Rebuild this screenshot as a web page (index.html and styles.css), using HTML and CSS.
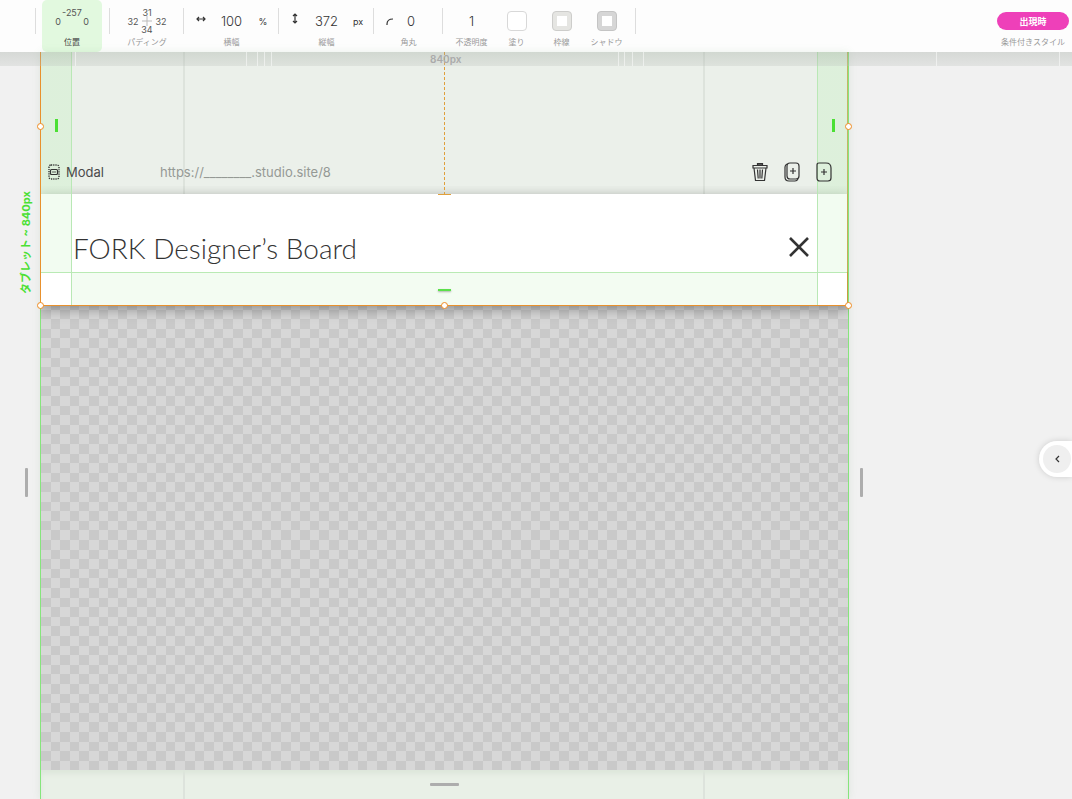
FILE: index.html
```html
<!DOCTYPE html>
<html lang="ja">
<head>
    <meta charset="UTF-8">
    <meta name="viewport" content="width=device-width, initial-scale=1.0">
    <title>FORK Designer's Board - Modal</title>
    <link rel="stylesheet" href="styles.css">
</head>
<body>
    <header class="toolbar">
        <div class="group first"></div>
        <div class="group">
            <div class="box active">
                <div class="sides">
                    <input class="top" type="text" value="-257" aria-label="上">
                    <input class="left" type="text" value="0" aria-label="左">
                    <input class="right" type="text" value="0" aria-label="右">
                </div>
                <span class="caption">位置</span>
            </div>
        </div>
        <div class="group">
            <div class="box">
                <div class="sides">
                    <input class="top" type="text" value="31" aria-label="上の余白">
                    <input class="left" type="text" value="32" aria-label="左の余白">
                    <svg class="cross" width="10" height="10" viewBox="0 0 10 10"><path d="M5 0v10M0 5h10" stroke="#bbb" fill="none"/></svg>
                    <input class="right" type="text" value="32" aria-label="右の余白">
                    <input class="bottom" type="text" value="34" aria-label="下の余白">
                </div>
                <span class="caption">パディング</span>
            </div>
        </div>
        <div class="group size">
            <div class="field">
                <svg width="10" height="8" viewBox="0 0 10 8"><path d="M1 4h8M3 2L1 4l2 2M7 2l2 2-2 2" stroke="#333" stroke-width="1.2" fill="none"/></svg>
                <input id="width" type="text" value="100">
                <span class="unit">%</span>
            </div>
            <label class="caption" for="width">横幅</label>
        </div>
        <div class="group size">
            <div class="field">
                <svg width="10" height="12" viewBox="0 0 10 12"><path d="M4 1v9M2 3l2-2 2 2M2 8l2 2 2-2" stroke="#333" stroke-width="1.2" fill="none"/></svg>
                <input id="height" type="text" value="372">
                <span class="unit">px</span>
            </div>
            <label class="caption" for="height">縦幅</label>
        </div>
        <div class="group radius">
            <div class="field">
                <svg width="8" height="8" viewBox="0 0 8 8"><path d="M1 8V7q0-5 6-5" stroke="#333" stroke-width="1.2" fill="none"/></svg>
                <input id="radius" type="text" value="0">
            </div>
            <label class="caption" for="radius">角丸</label>
        </div>
        <div class="group look">
            <div class="item">
                <input id="opacity" type="text" value="1">
                <label class="caption" for="opacity">不透明度</label>
            </div>
            <div class="item">
                <button class="swatch" id="fill" type="button"></button>
                <label class="caption" for="fill">塗り</label>
            </div>
            <div class="item">
                <button class="swatch border" id="border" type="button"></button>
                <label class="caption" for="border">枠線</label>
            </div>
            <div class="item">
                <button class="swatch shadow" id="shadow" type="button"></button>
                <label class="caption" for="shadow">シャドウ</label>
            </div>
        </div>
        <div class="condition">
            <button class="pill" id="condition" type="button">出現時</button>
            <label class="caption" for="condition">条件付きスタイル</label>
        </div>
    </header>

    <main class="workspace">
        <div class="gutter">
            <span class="breakpoint">タブレット ~ 840px</span>
            <span class="grip"></span>
        </div>

        <div class="stage">
            <section class="selected">
                <div class="above">
                    <div class="modal-bar">
                        <svg width="12" height="16" viewBox="0 0 12 16" fill="none" stroke="#333">
                            <rect x="1" y="1" width="10" height="14" rx="2" stroke-width="1.4" stroke-dasharray="1.2 1"/>
                            <rect x="2.5" y="5.5" width="7" height="5" rx="1" stroke-width="1.2"/>
                            <path d="M4 8h4" stroke-width=".8"/>
                        </svg>
                        <span class="name">Modal</span>
                        <a class="url" href="#">https://________.studio.site/8</a>
                        <div class="actions">
                            <button type="button" aria-label="削除">
                                <svg width="16" height="20" viewBox="0 0 16 20" fill="none" stroke="#333" stroke-width="1.2">
                                    <path d="M5.5 3V1.5h5V3" fill="#555"/>
                                    <path d="M1 3.5h14v2.5H1zM2 6l1.5 12.5h9L14 6M5.5 7.5l.7 9M8 7.5v9M10.5 7.5l-.7 9"/>
                                </svg>
                            </button>
                            <button type="button" aria-label="複製">
                                <svg width="16" height="20" viewBox="0 0 16 20" fill="none" stroke="#333" stroke-width="1.2">
                                    <path d="M6 1h6q3 0 3 3v10q0 3-3 3H6q-3 0-3-3V4q0-3 3-3z"/>
                                    <path d="M3 2Q1 3 1 5v10q0 4 4 4h6q2 0 3-2M9 6v6M6 9h6"/>
                                </svg>
                            </button>
                            <button type="button" aria-label="追加">
                                <svg width="16" height="20" viewBox="0 0 16 20" fill="none" stroke="#333" stroke-width="1.2">
                                    <path d="M3 1h7q5 0 5 5v10q0 3-3 3H4q-3 0-3-3V3q0-2 2-2zM8 7v6M5 10h6"/>
                                </svg>
                            </button>
                        </div>
                    </div>
                </div>
                <div class="modal">
                    <div class="modal-head">
                        <h1>FORK Designer’s Board</h1>
                        <button class="close" type="button" aria-label="閉じる">
                            <svg width="22" height="22" viewBox="0 0 22 22"><path d="M2 2l18 18M20 2L2 20" stroke="#333" stroke-width="2.6"/></svg>
                        </button>
                    </div>
                    <div class="modal-pad"><span></span></div>
                </div>
                <div class="outline">
                    <i class="side-pad start"></i>
                    <i class="side-pad end"></i>
                    <i class="offset-line"></i>
                    <i class="handle mid-left"></i>
                    <i class="handle mid-right"></i>
                    <i class="handle bottom-left"></i>
                    <i class="handle bottom-center"></i>
                    <i class="handle bottom-right"></i>
                </div>
            </section>
            <div class="checker"></div>
            <div class="below"><span class="grip"></span></div>
        </div>

        <div class="gutter end-gutter">
            <span class="grip"></span>
        </div>

        <div class="ruler">
            <svg width="100%" height="14">
                <path d="M75.5 0v14M246.5 0v14M257.5 0v14M264.5 0v14M271.5 0v14M618.5 0v14M624.5 0v14M632.5 0v14M643.5 0v14M936.5 0v14M1059.5 0v14" stroke="#fff" stroke-opacity=".5"/>
            </svg>
            <span>840px</span>
        </div>
        <button class="panel-toggle" type="button" aria-label="パネルを開く">
            <span><svg width="8" height="10" viewBox="0 0 8 10"><path d="M6 2L3 5l3 3" stroke="#333" stroke-width="1.2" fill="none"/></svg></span>
        </button>
    </main>
</body>
</html>
```
FILE: styles.css
```css
* {
    box-sizing: border-box;
}
body {
    margin: 0;
    min-height: 100vh;
    display: flex;
    flex-direction: column;
    background: #f1f1f1;
    color: #333;
    font-family: Inter, "Noto Sans CJK JP", sans-serif;
    font-size: 13px;
}
button {
    padding: 0;
    border: none;
    background: none;
    cursor: pointer;
}
input {
    border: none;
    padding: 0;
    background: none;
    color: #333;
    font: inherit;
    font-weight: 300;
    text-align: center;
    min-width: 0;
}
svg {
    display: block;
}

/* toolbar */
.toolbar {
    display: flex;
    height: 52px;
    background: #fdfdfd;
}
.group {
    position: relative;
    display: flex;
    flex-direction: column;
    align-items: center;
    width: 74px;
    padding-top: 8px;
}
.group::after {
    content: "";
    position: absolute;
    right: 0;
    top: 8px;
    width: 1px;
    height: 26px;
    background: #ddd;
}
.group.first {
    width: 36px;
}
.group.size {
    width: 95px;
}
.group.radius {
    width: 69px;
}
.caption {
    color: #999;
    font-size: 8px;
    line-height: 12px;
    white-space: nowrap;
}
.box {
    display: flex;
    flex-direction: column;
    align-items: center;
    width: 60px;
    height: 52px;
    margin-top: -8px;
    padding-top: 8px;
    border-radius: 5px;
}
.box.active {
    margin-right: 2px;
    background: #e2f9df;
}
.box.active .caption {
    color: #444;
}
.sides {
    display: grid;
    grid-template-columns: 12px 16px 12px;
    grid-template-areas: ". top ." "left cross right" ". bottom .";
    grid-template-rows: 9px 8px 9px;
    align-items: center;
    justify-items: center;
    margin-bottom: 2px;
    font-size: 9px;
}
.sides input {
    width: 24px;
    line-height: 8px;
    font-weight: 400;
    color: #555;
}
.sides .top {
    grid-area: top;
}
.sides .left {
    grid-area: left;
}
.sides .right {
    grid-area: right;
}
.sides .bottom {
    grid-area: bottom;
}
.sides .cross {
    grid-area: cross;
}
.field {
    display: flex;
    align-items: center;
    gap: 8px;
    width: 100%;
    height: 26px;
    margin-bottom: 2px;
    padding: 0 10px 0 12px;
}
.field input {
    width: 40px;
    flex: 1;
}
.field svg {
    margin-bottom: 4px;
}
.radius .field {
    gap: 4px;
}
.radius .field svg {
    margin-bottom: 0;
}
.radius .field input {
    flex: 0 0 26px;
}
.unit {
    width: 12px;
    font-size: 9px;
    text-align: center;
}
.group.look {
    flex-direction: row;
    align-items: flex-start;
    width: 193px;
    padding-left: 6px;
}
.item {
    display: flex;
    flex-direction: column;
    align-items: center;
    width: 45px;
}
.item input {
    width: 40px;
    height: 26px;
    margin-bottom: 2px;
}
.swatch {
    width: 20px;
    height: 20px;
    margin: 3px 0 5px;
    border: 1px solid #d8d8d8;
    border-radius: 4px;
    background: #fff;
}
.swatch.border {
    border-color: #cdcdcb;
    background: linear-gradient(#fff, #fff) center / 10px 10px no-repeat #e5e5e2;
}
.swatch.shadow {
    border-color: #c4c4c4;
    background: linear-gradient(#fff, #fff) center / 10px 10px no-repeat #d6d6d6;
}
.condition {
    display: flex;
    flex-direction: column;
    align-items: center;
    margin-left: auto;
    padding: 12px 3px 0;
}
.pill {
    width: 72px;
    height: 18px;
    margin-bottom: 6px;
    border-radius: 9px;
    background: #ee40b9;
    color: #fff;
    font: bold 9px "Noto Sans CJK JP", sans-serif;
}

/* workspace */
.workspace {
    position: relative;
    flex: 1;
    display: grid;
    grid-template-columns: 40px 1fr 223px;
}
.gutter {
    display: flex;
    flex-direction: column;
    padding-top: 142px;
}
.breakpoint {
    width: 16px;
    height: 100px;
    margin-left: 18px;
    writing-mode: vertical-rl;
    text-orientation: sideways;
    transform: rotate(180deg);
    color: #4be034;
    font-size: 11px;
    font-weight: 700;
    line-height: 16px;
    white-space: nowrap;
}
.grip {
    width: 3px;
    height: 29px;
    border-radius: 1px;
    background: #adadad;
}
.gutter .grip {
    margin: 174px 0 0 25px;
}
.end-gutter .grip {
    margin: 274px 0 0 11px;
}
.stage {
    display: flex;
    flex-direction: column;
    box-shadow: 0 0 8px rgba(90, 160, 90, 0.12);
}
.selected {
    position: relative;
    z-index: 1;
}
.above,
.below {
    background:
        linear-gradient(#dde3dc, #dde3dc) 143px 0 / 2px 100% no-repeat border-box,
        linear-gradient(#dde3dc, #dde3dc) right 144px top 0 / 2px 100% no-repeat border-box,
        #ebf0ea;
}
.above {
    display: flex;
    align-items: flex-end;
    height: 142px;
    padding-bottom: 10px;
}
.modal-bar {
    position: relative;
    z-index: 2;
    display: flex;
    align-items: center;
    width: 100%;
    height: 24px;
    padding: 0 17px 0 8px;
}
.name {
    width: 94px;
    margin-left: 6px;
    color: #4a4a4a;
}
.url {
    color: #959995;
    text-decoration: none;
}
.actions {
    display: flex;
    gap: 16px;
    margin-left: auto;
}
.modal {
    background: #fff;
    box-shadow: 0 3px 12px rgba(0, 0, 0, 0.35);
    clip-path: inset(-8px 0 -20px 0);
}
.modal-head {
    display: flex;
    align-items: center;
    justify-content: space-between;
    height: 79px;
    padding: 30px 39px 0 33px;
    border-bottom: 1px solid #b9eab4;
}
h1 {
    margin: 0;
    font-family: Lato, sans-serif;
    font-size: 28px;
    font-weight: 300;
    line-height: 34px;
}
.close {
    position: relative;
    z-index: 2;
    margin-bottom: 2px;
}
.modal-pad {
    display: flex;
    align-items: center;
    justify-content: center;
    height: 33px;
    margin: 0 31px;
    background: #f3fcf2;
}
.modal-pad span {
    width: 13px;
    height: 2px;
    background: #5be04a;
    box-shadow: 0 1px 2px rgba(0, 0, 0, 0.3);
}

/* selection outline drawn over the modal */
.outline {
    position: absolute;
    inset: 0;
    border: 1px solid #e8912d;
    border-top: none;
    border-right-color: #86e57c;
}
.outline::after {
    content: "";
    position: absolute;
    top: 0;
    right: 0;
    bottom: 0;
    width: 1px;
    background: #c99a40;
}
.outline i {
    position: absolute;
    z-index: 1;
}
.side-pad {
    top: 0;
    bottom: 0;
    width: 31px;
    background:
        linear-gradient(#4be034, #4be034) center 67px / 3px 13px no-repeat,
        linear-gradient(rgba(190, 240, 185, 0.3) 142px, rgba(190, 240, 185, 0.2) 142px, rgba(190, 240, 185, 0.2) 220px, transparent 220px);
}
.side-pad.start {
    left: 0;
    border-right: 1px solid #b9e8b5;
}
.side-pad.end {
    right: 0;
    border-left: 1px solid #b9e8b5;
}
.offset-line {
    left: 50%;
    top: 0;
    height: 142px;
    width: 1px;
    margin-left: -1px;
    background: repeating-linear-gradient(#e0a03c 0 3px, transparent 3px 5px);
}
.offset-line::after {
    content: "";
    position: absolute;
    bottom: -1px;
    left: -6px;
    width: 13px;
    height: 1px;
    background: #e0a03c;
}
.handle {
    width: 7px;
    height: 7px;
    border: 1px solid #ef8b22;
    border-radius: 50%;
    background: #fff;
}
.mid-left,
.mid-right {
    top: 71px;
}
.mid-left,
.bottom-left {
    left: -4px;
}
.mid-right,
.bottom-right {
    right: -4px;
}
.bottom-left,
.bottom-center,
.bottom-right {
    bottom: -4px;
}
.bottom-center {
    left: calc(50% - 4px);
}
.checker {
    flex: 1;
    border: solid #86e57c;
    border-width: 0 1px;
    background: #d7d7d7 url("data:image/svg+xml,%3Csvg xmlns='http://www.w3.org/2000/svg' viewBox='0 0 2 2' shape-rendering='crispEdges'%3E%3Cpath fill='%23c9c9c9' d='M1 0h1v1H1zM0 1h1v1H0z'/%3E%3C/svg%3E") 0 -6px / calc(100% / 42) auto;
}
.below {
    display: flex;
    justify-content: center;
    height: 29px;
    padding-top: 13px;
    border: solid #86e57c;
    border-width: 0 1px;
    background-color: #e9f0e7;
    box-shadow: inset 0 4px 5px #dde6db;
}
.below .grip {
    width: 29px;
    height: 3px;
}
.ruler {
    position: absolute;
    top: 0;
    left: 0;
    right: 0;
    height: 14px;
    background: linear-gradient(rgba(150, 160, 150, 0.3), rgba(190, 195, 190, 0.3));
    z-index: 1;
}
.ruler span {
    position: absolute;
    top: 0;
    left: 430px;
    color: #aaa;
    font-size: 10px;
    font-weight: 600;
    line-height: 14px;
}
.panel-toggle {
    position: absolute;
    right: 0;
    top: 389px;
    width: 33px;
    height: 36px;
    padding: 4px 1px 4px 4px;
    border-radius: 18px 0 0 18px;
    background: #fff;
    box-shadow: 0 0 6px rgba(0, 0, 0, 0.15);
}
.panel-toggle span {
    display: flex;
    align-items: center;
    justify-content: center;
    width: 28px;
    height: 28px;
    border-radius: 50%;
    background: #efefef;
}
```
